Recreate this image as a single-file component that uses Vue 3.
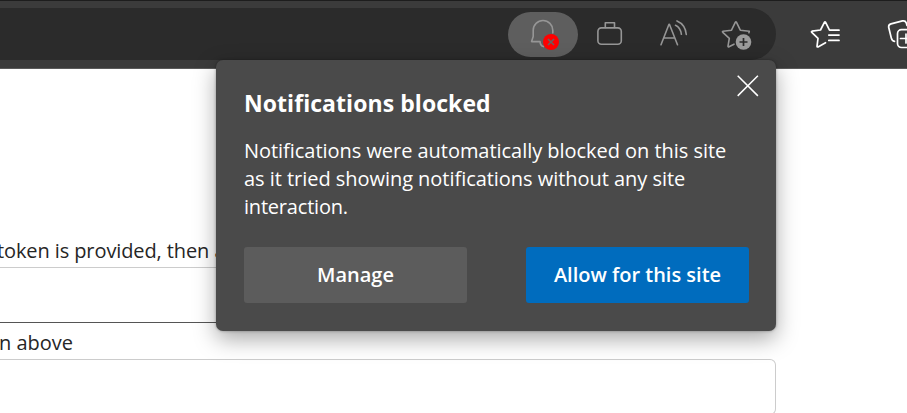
<script setup>
const message = [
  { text: 'Notifications were automatically blocked on this site', cls: 'l1' },
  { text: 'as it tried showing notifications without any site', cls: 'l2' },
  { text: 'interaction.', cls: 'l3' },
]
</script>

<template>
  <div class="window">
    <header class="toolbar">
      <div class="address">
        <button class="bell" aria-label="Notifications">
          <svg width="70" height="45" viewBox="508 12 70 45">
            <path class="dim" d="M552.8 33V30.3a9.8 9.8 0 0 0-19.6 0V36.5L531.6 41.6H540c.2 2.8 1.3 4.3 3.5 5" />
            <circle cx="551" cy="42" r="8" fill="#f00" />
            <path d="M548 39l6 6m0-6l-6 6" stroke="#6b6060" stroke-width="1.7" />
          </svg>
        </button>
        <svg width="63" height="52" viewBox="578 8 63 52">
          <rect class="dim" x="597.9" y="27.9" width="23.400" height="16.400" rx="3.500" />
          <path class="dim" d="M605.3 27.500V22.700H614.500V27.500" />
        </svg>
        <svg width="63" height="52" viewBox="641 8 63 52">
          <path class="dim" d="M661 44.700L669 24.300H669.400L677.500 44.700M664 38H674.700M675.500 25.300c3.200 1.500 5.300 4.600 5.900 9M677 20.900c5.200 2.200 8.700 7 9.300 13.600" />
        </svg>
        <svg width="63" height="52" viewBox="704 8 63 52">
          <path class="dim" d="M748.900 32.800L749.300 31.300L740.300 30.200L736.400 22.200Q735.900 21.300 735.400 22.200L731.500 30.200L723 31.200Q722 31.500 722.800 32.300L729.300 38.300L728 46.200Q728 47.300 729 46.800L734 44.200" />
          <circle cx="743.500" cy="42" r="7.800" fill="#9b9b9b" />
          <path d="M743.500 38v8m-4-4h8" stroke="#2b2b2b" stroke-width="1.700" />
        </svg>
      </div>
      <svg class="outer" width="63" height="52" viewBox="793 8 63 52">
        <path class="light" d="M839 30.200H829.500L825.500 22.200Q825 21.300 824.500 22.200L820.500 30L812 31.200Q811 31.500 811.800 32.300L818 38.300L817 46.300Q817 47.300 818 46.900L825.500 42.700M828.800 35.100H839M828.800 40.400H839" />
      </svg>
      <svg class="edge" width="51" height="52" viewBox="856 8 51 52">
        <path class="light" d="M894.500 41.400C892.500 41 891.700 39.500 891.300 38L888.800 27.800Q888.100 24.800 891 23.900L902.500 20.900Q905.500 20.300 906.300 23L907 25.500" />
        <rect class="light" x="897.500" y="29.700" width="20" height="17.800" rx="4" />
        <path class="light" d="M900.500 38.500H910M906 34V43" />
      </svg>
    </header>

    <main class="page">
      <p class="label first">token is provided, then a</p>
      <div class="field upper"></div>
      <p class="label second">n above</p>
      <div class="field lower"></div>
    </main>

    <section class="popup" role="dialog">
      <svg class="close" width="22" height="22" viewBox="0 0 22 22">
        <path d="M.7.700l20.200 20.200M20.900.700L.7 20.900" />
      </svg>
      <h1><span>Notifications blocked</span></h1>
      <p class="message">
        <span v-for="line in message" :key="line.cls" :class="line.cls">{{ line.text }}</span>
      </p>
      <div class="actions">
        <button class="manage"><span>Manage</span></button>
        <button class="allow"><span>Allow for this site</span></button>
      </div>
    </section>
  </div>
</template>

<style>
body { margin: 0; overflow: hidden; }
</style>

<style scoped>
* { box-sizing: border-box; }
.window {
  position: relative;
  width: 907px;
  height: 413px;
  overflow: hidden;
  background: #fff;
  font-family: "Open Sans", "Noto Sans", sans-serif;
}
svg { display: block; flex: none; fill: none; }
.dim { stroke: #969696; stroke-width: 1.6; stroke-linejoin: round; stroke-linecap: round; }
.light { stroke: #fff; stroke-width: 1.7; stroke-linejoin: round; stroke-linecap: round; }
.toolbar {
  display: flex;
  height: 69px;
  padding-top: 7px;
  background: #3b3b3b;
  border-top: 1px solid #1d1d1d;
  border-bottom: 1px solid #5a5a5a;
}
.address {
  display: flex;
  flex: none;
  justify-content: flex-end;
  align-items: center;
  width: 776px;
  height: 52px;
  padding-right: 9px;
  background: #2b2b2b;
  border-radius: 0 26px 26px 0;
}
.outer { margin-left: 17px; }
button {
  display: flex;
  align-items: center;
  justify-content: center;
  padding: 0;
  border: 0;
  color: #fff;
  font: 600 20px "Open Sans", "Noto Sans", sans-serif;
  white-space: nowrap;
}
.bell {
  width: 70px;
  height: 45px;
  background: #5e5e5e;
  border-radius: 23px;
}
.page { padding-top: 168px; }
.label {
  margin: 0;
  height: 30px;
  line-height: 28px;
  font-size: 20px;
  color: #262626;
  white-space: nowrap;
}
.first { margin-left: -3px; letter-spacing: -0.1px; }
.second { height: 36px; margin-left: -1px; padding-top: 6px; }
.field {
  width: 776px;
  border: 1px solid #ccc;
  border-left: 0;
}
.upper { height: 56px; border-bottom-color: #555; }
.lower { height: 56px; border-radius: 0 6px 6px 0; }
.popup {
  position: absolute;
  left: 216px;
  top: 60px;
  width: 560px;
  height: 271px;
  padding: 28px 27px 28px 28px;
  color: #fff;
  background: #4a4a4a;
  border-radius: 7px;
  box-shadow: 0 0 3px rgba(0, 0, 0, .35), 0 8px 22px rgba(0, 0, 0, .34);
}
.close {
  position: absolute;
  top: 15px;
  right: 17px;
  stroke: #fff;
  stroke-width: 1.5;
}
h1 {
  margin: 0;
  height: 49px;
  font-size: 23px;
  line-height: 30px;
  font-weight: 700;
  letter-spacing: 0.06px;
  white-space: nowrap;
}
.message {
  display: flex;
  flex-direction: column;
  align-items: flex-start;
  margin: 0 0 26px;
  font-size: 20px;
  line-height: 28px;
  letter-spacing: -0.04px;
  white-space: nowrap;
}
.l3 { letter-spacing: -0.2px; }
.actions { display: flex; justify-content: space-between; }
.actions button { width: 223px; height: 56px; padding-bottom: 2px; border-radius: 3px; }
.actions .manage { background: #5c5c5c; }
.actions .allow { background: #006cbe; }
</style>
